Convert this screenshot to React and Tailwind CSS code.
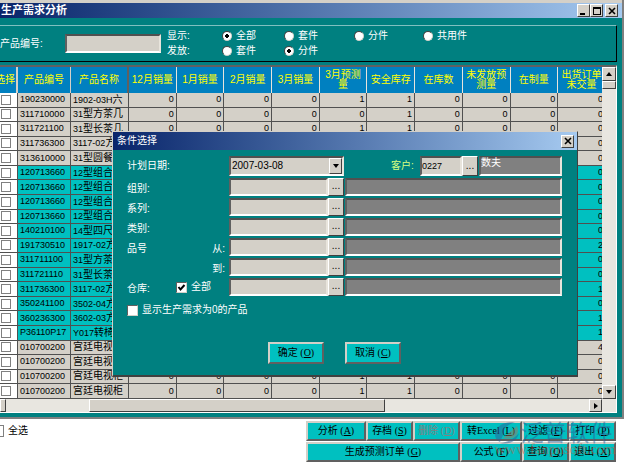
import React from "react";

const columns = [
  "12月销量",
  "1月销量",
  "2月销量",
  "3月销量",
  "3月预测量",
  "安全库存",
  "在库数",
  "未发放预测量",
  "在制量",
  "出货订单未交量",
];

const rows = [
  { code: "190230000", model: "1902-03H", name: "六", forecast: 1, open: 0 },
  { code: "311710000", model: "31", name: "型方茶几", forecast: 0, open: 0 },
  { code: "311721100", model: "31", name: "型长茶几", forecast: 1, open: 0 },
  { code: "311736300", model: "3117-02", name: "方", forecast: 1, open: 0 },
  { code: "313610000", model: "31", name: "型圆餐", forecast: 1, open: 0 },
  { code: "120713660", model: "12", name: "型组合", forecast: 1, open: 0, marked: true },
  { code: "120713660", model: "12", name: "型组合", forecast: 1, open: 0, marked: true },
  { code: "120713660", model: "12", name: "型组合", forecast: 1, open: 0, marked: true },
  { code: "120713660", model: "12", name: "型组合", forecast: 1, open: 0, marked: true },
  { code: "140210100", model: "14", name: "型四尺", forecast: 1, open: 0, marked: true },
  { code: "191730510", model: "1917-02", name: "方", forecast: 1, open: 2, marked: true },
  { code: "311711100", model: "31", name: "型方茶", forecast: 1, open: 0, marked: true },
  { code: "311721110", model: "31", name: "型长茶", forecast: 1, open: 0, marked: true },
  { code: "311736300", model: "3117-02", name: "方", forecast: 1, open: 1, marked: true },
  { code: "350241100", model: "3502-04", name: "方", forecast: 1, open: 0, marked: true },
  { code: "360236300", model: "3602-03", name: "方", forecast: 1, open: 1, marked: true },
  { code: "P36110P17", model: "Y017", name: "转椅", forecast: 1, open: 1, marked: true },
  { code: "010700200", model: "", name: "宫廷电视", forecast: 1, open: 4 },
  { code: "010700200", model: "", name: "宫廷电视", forecast: 1, open: 0 },
  { code: "010700200", model: "", name: "宫廷电视柜", forecast: 1, open: 0 },
  { code: "010700200", model: "", name: "宫廷电视柜", forecast: 1, open: 0 },
];

const raised = "border border-t-white border-l-white border-r-[#404040] border-b-[#404040] bg-[#d4d0c8]";
const sunken = "border-2 border-t-[#505050] border-l-[#606060] border-r-[#e8e4dc] border-b-white";

const Arrow = ({ className }) => (
  <svg viewBox="0 0 6 4" className={className} aria-hidden="true">
    <path d="M0 0h6L3 4z" fill="#000" />
  </svg>
);

const CloseIcon = () => (
  <svg viewBox="0 0 8 8" className="w-2 h-2" aria-hidden="true">
    <path d="M1 1l6 6M7 1L1 7" stroke="#000" strokeWidth="1.6" />
  </svg>
);

const WindowButton = ({ label, children }) => (
  <button type="button" aria-label={label} className={`w-[13px] h-[13px] flex items-center justify-center ${raised}`}>
    {children}
  </button>
);

const Radio = ({ name, label, defaultChecked }) => (
  <label className="flex items-center gap-1">
    <input
      type="radio"
      name={name}
      defaultChecked={defaultChecked}
      className="appearance-none w-[10px] h-[10px] rounded-full bg-white border border-t-[#404040] border-l-[#404040] border-r-[#d4d0c8] border-b-[#d4d0c8] checked:bg-[radial-gradient(circle,#000_0_2px,#fff_2px)]"
    />
    {label}
  </label>
);

const Check = ({ label, defaultChecked }) => (
  <label className="flex items-center gap-1">
    <span className="grid w-[11px] h-[11px]">
      <input
        type="checkbox"
        defaultChecked={defaultChecked}
        className="peer col-start-1 row-start-1 appearance-none w-[11px] h-[11px] bg-white border border-t-[#606060] border-l-[#606060] border-r-[#d4d0c8] border-b-[#d4d0c8]"
      />
      <svg viewBox="0 0 11 11" className="col-start-1 row-start-1 invisible peer-checked:visible pointer-events-none" aria-hidden="true">
        <path d="M2.5 5l2 2.5L8.5 3" fill="none" stroke="#000" strokeWidth="2" />
      </svg>
    </span>
    {label}
  </label>
);

const LookupButton = ({ label }) => (
  <button type="button" aria-label={label} className={`w-4 shrink-0 flex items-end justify-center pb-1 text-black text-[10px] leading-none ${raised}`}>
    ...
  </button>
);

const LookupRow = ({ label, side, children, name }) => (
  <div className="flex h-[18px]">
    <div className="w-[102px] shrink-0 flex items-center justify-between pr-1 pt-1">
      <span>{label}</span>
      {side && <span>{side}</span>}
      {children}
    </div>
    <input type="text" aria-label={name} className={`w-[99px] min-w-0 px-px text-black bg-[#d4d0c8] ${sunken}`} />
    <LookupButton label={`${name} 选择`} />
    <output aria-label={`${name} 名称`} className={`flex-1 ml-px bg-[#808080] ${sunken}`} />
  </div>
);

const ActionButton = ({ text, hotkey, disabled, className = "" }) => (
  <button
    type="button"
    disabled={disabled}
    className={`h-5 whitespace-nowrap bg-[#00c0c0] text-black border-2 border-t-[#d4d0c8] border-l-[#d4d0c8] border-r-[#606060] border-b-[#606060] font-['Liberation_Serif','Noto_Sans_CJK_SC',serif] disabled:text-[#808080] ${className}`}
  >
    {text} (<u>{hotkey}</u>)
  </button>
);

const TitleBar = () => (
  <header className="mt-0.5 h-[15px] pl-px pr-1 flex items-center justify-between bg-linear-to-r from-[#0a246a] to-[#a6caf0]">
    <h1 className="text-[11px] leading-none font-bold text-white">生产需求分析</h1>
    <div className="flex">
      <WindowButton label="最小化">
        <span className="w-[5px] h-0.5 mt-1.5 mr-0.5 bg-black" />
      </WindowButton>
      <WindowButton label="最大化">
        <span className="w-2 h-2 border border-t-2 border-black" />
      </WindowButton>
      <span className="w-0.5" />
      <WindowButton label="关闭">
        <CloseIcon />
      </WindowButton>
    </div>
  </header>
);

const FilterPanel = () => (
  <section className="mt-[7px] mr-[5px] h-[37px] flex items-center border-t border-r border-b border-t-[#80c0c0] border-r-black border-b-black">
    <label className="flex items-center text-white">
      <span className="w-[65px]">产品编号:</span>
      <input type="text" className={`w-24 h-[19px] px-0.5 text-black bg-[#d4d0c8] ${sunken}`} />
    </label>
    <div className="ml-1.5 grid grid-cols-[55px_62px_70px_69px_auto] gap-y-[5px] text-white leading-[10px]">
      <span>显示:</span>
      <Radio name="show" label="全部" defaultChecked />
      <Radio name="show" label="套件" />
      <Radio name="show" label="分件" />
      <Radio name="show" label="共用件" />
      <span>发放:</span>
      <Radio name="issue" label="套件" />
      <Radio name="issue" label="分件" defaultChecked />
    </div>
  </section>
);

const cell = "p-0 border-r border-b border-[#505050]";

const ProductTable = () => (
  <table className="-ml-1.5 w-[612px] h-[332px] table-fixed border-separate border-spacing-0 leading-none">
    <colgroup>
      <col className="w-6" />
      <col className="w-[53px]" />
      <col className="w-[58px]" />
    </colgroup>
    <thead>
      <tr className="h-[26px] bg-[#0080c0] text-[#ffff00] leading-[10px]">
        <th className="p-0 font-normal whitespace-nowrap border-r-2 border-[#d4d0c8]">选择</th>
        <th className="p-0 font-normal border-r border-[#d4d0c8]">产品编号</th>
        <th className="p-0 font-normal border-r-2 border-[#606060]">产品名称</th>
        {columns.map((title) => (
          <th key={title} className="px-px py-0 font-normal border-r border-[#e8e4dc]">{title}</th>
        ))}
      </tr>
    </thead>
    <tbody>
      {rows.map((row, i) => (
        <tr key={i} className={row.marked ? "bg-[#00c0c0]" : "bg-[#d4d0c8]"}>
          <td className={`${cell} bg-white`}>
            <input type="checkbox" aria-label={`选择 ${row.code}`} className="block mx-auto appearance-none w-[10px] h-[10px] bg-white border border-[#808080]" />
          </td>
          <td className={`${cell} pl-0.5 text-[9px]`}>{row.code}</td>
          <td className={`${cell} pl-0.5 whitespace-nowrap overflow-hidden`}>
            <span className="text-[9px]">{row.model}</span>
            {row.name}
          </td>
          {[0, 0, 0, 0, row.forecast, 1, 0, 0, 0, row.open].map((value, j) => (
            <td key={j} className={`${cell} pr-0.5 text-right text-[9px]`}>{value}</td>
          ))}
        </tr>
      ))}
    </tbody>
  </table>
);

const ConditionDialog = () => (
  <section
    role="dialog"
    aria-label="条件选择"
    className="absolute left-[112px] top-[131px] w-[466px] h-[246px] flex flex-col bg-[#008080] text-white border border-t-[#d4d0c8] border-l-[#d4d0c8] border-r-[#404040] border-b-2 border-b-[#404040]"
  >
    <header className="h-[18px] shrink-0 pl-1 pr-[3px] flex items-center justify-between bg-linear-to-r from-[#0a246a] to-[#a6caf0]">
      <h2>条件选择</h2>
      <WindowButton label="关闭">
        <CloseIcon />
      </WindowButton>
    </header>
    <form className="pt-1.5 pl-3.5 pr-[15px] flex flex-col gap-0.5">
      <div className="flex h-5">
        <label htmlFor="plan-date" className="w-[102px] shrink-0 self-center">计划日期:</label>
        <div className="relative w-[115px] shrink-0">
          <select id="plan-date" className={`w-full h-5 appearance-none pl-px text-black bg-[#d4d0c8] ${sunken}`}>
            <option>2007-03-08</option>
          </select>
          <span className={`absolute right-0.5 top-0.5 w-[13px] h-4 flex items-center justify-center pointer-events-none ${raised}`}>
            <Arrow className="w-1.5 h-1" />
          </span>
        </div>
        <label htmlFor="customer" className="ml-auto w-[29px] self-center text-[#d8ff80]">客户:</label>
        <input id="customer" type="text" defaultValue="0227" className={`w-[42px] px-0 text-[9px] text-black bg-[#d4d0c8] ${sunken}`} />
        <LookupButton label="客户 选择" />
        <output className={`w-[83px] ml-px leading-[10px] bg-[#808080] ${sunken}`}>数夫</output>
      </div>
      <LookupRow label="组别:" name="组别" />
      <LookupRow label="系列:" name="系列" />
      <LookupRow label="类别:" name="类别" />
      <LookupRow label="品号" side="从:" name="品号从" />
      <LookupRow label="" side="到:" name="品号到" />
      <LookupRow label="仓库:" name="仓库">
        <span className="mr-3.5 -mt-1">
          <Check label="全部" defaultChecked />
        </span>
      </LookupRow>
      <div className="mt-1.5">
        <Check label="显示生产需求为0的产品" />
      </div>
      <div className="mt-6 mr-5 flex justify-center gap-[21px]">
        <ActionButton text="确定" hotkey="O" className="w-14 h-[22px]" />
        <ActionButton text="取消" hotkey="C" className="w-14 h-[22px]" />
      </div>
    </form>
  </section>
);

const Watermark = () => (
  <div className="absolute right-2.5 bottom-2 pointer-events-none opacity-50" aria-hidden="true">
    <div className="flex items-center">
      <svg viewBox="0 0 26 24" className="w-[26px] h-6">
        <path d="M1 13C2 5 9 1 21 1 13 4 9 8 10 12l-4 9C2 19 1 16 1 13z" fill="#2d6098" />
        <path d="M9 17L23 5c3 7-1 15-14 12z" fill="#a07860" />
        <path d="M6 22c8-1 14-4 19-10-2 8-9 12-19 10z" fill="#2d6098" />
      </svg>
      <span className="text-[23px] leading-6 text-[#2d6098]">泛普软件</span>
    </div>
    <div className="-mt-0.5 text-right font-['Liberation_Serif',serif] text-[15px] leading-3 text-[#c06040]">www.fanpusoft.com</div>
  </div>
);

export default function App() {
  return (
    <div className="relative overflow-hidden bg-white text-black text-[10px] leading-3 font-['Liberation_Sans','Noto_Sans_CJK_SC',sans-serif]">
      <main className="mr-0.5 bg-[#008080] border-r-2 border-b-2 border-[#808080]">
        <div className="bg-[#d4d0c8] pt-px">
          <TitleBar />
        </div>
        <div className="pb-1">
          <FilterPanel />
          <div className="mt-[3px] mr-[5px] border-t-2 border-r border-t-[#606060] border-r-white">
            <div className="flex h-[332px]">
              <div className="flex-1 min-w-0 overflow-hidden">
                <ProductTable />
              </div>
              <div className="w-3.5 shrink-0 flex flex-col bg-[#e8e6e0]">
                <button type="button" aria-label="向上滚动" className={`h-3.5 flex items-center justify-center ${raised}`}>
                  <Arrow className="w-1.5 h-1 rotate-180" />
                </button>
                <div className={`h-2 ${raised}`} />
                <button type="button" aria-label="向下滚动" className={`mt-auto h-3.5 flex items-center justify-center ${raised}`}>
                  <Arrow className="w-1.5 h-1" />
                </button>
              </div>
            </div>
            <div className="h-3.5 flex bg-[#e8e6e0] border-b border-white">
              <div className={`w-1.5 ${raised}`} />
              <div className={`ml-[83px] w-[296px] ${raised}`} />
              <button type="button" aria-label="向右滚动" className={`ml-auto mr-3.5 w-[13px] flex items-center justify-center ${raised}`}>
                <Arrow className="w-1.5 h-1 -rotate-90" />
              </button>
            </div>
          </div>
        </div>
      </main>
      <footer className="pt-0.5 pr-2.5 pb-px flex items-start justify-between">
        <div className="-ml-2 mt-1">
          <label className="flex items-center gap-1">
            <input type="checkbox" className="appearance-none w-3 h-3 bg-white border border-[#808080]" />
            全选
          </label>
        </div>
        <div className="grid grid-cols-[60px_47px_47px_62px_47px_47px] gap-y-px">
          <ActionButton text="分析" hotkey="A" />
          <ActionButton text="存档" hotkey="S" />
          <ActionButton text="删除" hotkey="D" disabled />
          <ActionButton text="转Excel" hotkey="L" />
          <ActionButton text="过滤" hotkey="F" />
          <ActionButton text="打印" hotkey="P" />
          <ActionButton text="生成预测订单" hotkey="G" className="col-span-3" />
          <ActionButton text="公式" hotkey="F" />
          <ActionButton text="查询" hotkey="Q" />
          <ActionButton text="退出" hotkey="X" />
        </div>
      </footer>
      <ConditionDialog />
      <Watermark />
    </div>
  );
}
